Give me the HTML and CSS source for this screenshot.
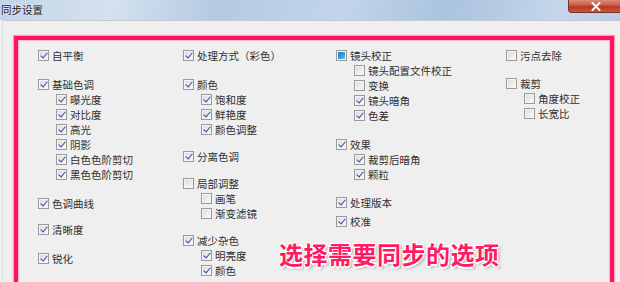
FILE: index.html
```html
<!DOCTYPE html>
<html lang="zh">
<head>
<meta charset="utf-8">
<title>同步设置</title>
<link rel="stylesheet" href="styles.css">
</head>
<body>
<div class="window">
  <div class="titlebar">
    <span class="title">同步设置</span>
    <span class="close"><svg width="10" height="9" viewBox="0 0 10 9"><path d="M1.5 1 L8.5 8 M8.5 1 L1.5 8" stroke="#fff" stroke-width="2" stroke-linecap="round"/></svg></span>
  </div>
  <div class="client">
    <div class="frame">
      <div class="columns">
        <div class="col">
          <div class="group">
            <div class="item"><span class="cb on"></span>自平衡</div>
          </div>
          <div class="group">
            <div class="item"><span class="cb on"></span>基础色调</div>
            <div class="item sub"><span class="cb on"></span>曝光度</div>
            <div class="item sub"><span class="cb on"></span>对比度</div>
            <div class="item sub"><span class="cb on"></span>高光</div>
            <div class="item sub"><span class="cb on"></span>阴影</div>
            <div class="item sub"><span class="cb on"></span>白色色阶剪切</div>
            <div class="item sub"><span class="cb on"></span>黑色色阶剪切</div>
          </div>
          <div class="group">
            <div class="item"><span class="cb on"></span>色调曲线</div>
          </div>
          <div class="group g-small">
            <div class="item"><span class="cb on"></span>清晰度</div>
          </div>
          <div class="group">
            <div class="item"><span class="cb on"></span>锐化</div>
          </div>
        </div>
        <div class="col">
          <div class="group">
            <div class="item"><span class="cb on"></span>处理方式（彩色）</div>
          </div>
          <div class="group">
            <div class="item"><span class="cb on"></span>颜色</div>
            <div class="item sub"><span class="cb on"></span>饱和度</div>
            <div class="item sub"><span class="cb on"></span>鲜艳度</div>
            <div class="item sub"><span class="cb on"></span>颜色调整</div>
          </div>
          <div class="group g-mid">
            <div class="item"><span class="cb on"></span>分离色调</div>
          </div>
          <div class="group g-mid">
            <div class="item"><span class="cb"></span>局部调整</div>
            <div class="item sub"><span class="cb"></span>画笔</div>
            <div class="item sub"><span class="cb"></span>渐变滤镜</div>
          </div>
          <div class="group g-mid">
            <div class="item"><span class="cb on"></span>减少杂色</div>
            <div class="item sub"><span class="cb on"></span>明亮度</div>
            <div class="item sub"><span class="cb on"></span>颜色</div>
          </div>
        </div>
        <div class="col">
          <div class="group">
            <div class="item"><span class="cb mixed"></span>镜头校正</div>
            <div class="item sub"><span class="cb"></span>镜头配置文件校正</div>
            <div class="item sub"><span class="cb"></span>变换</div>
            <div class="item sub"><span class="cb on"></span>镜头暗角</div>
            <div class="item sub"><span class="cb on"></span>色差</div>
          </div>
          <div class="group">
            <div class="item"><span class="cb on"></span>效果</div>
            <div class="item sub"><span class="cb on"></span>裁剪后暗角</div>
            <div class="item sub"><span class="cb on"></span>颗粒</div>
          </div>
          <div class="group g-mid2">
            <div class="item"><span class="cb on"></span>处理版本</div>
          </div>
          <div class="group g-tight">
            <div class="item"><span class="cb on"></span>校准</div>
          </div>
        </div>
        <div class="col">
          <div class="group">
            <div class="item"><span class="cb"></span>污点去除</div>
          </div>
          <div class="group g-mid2">
            <div class="item"><span class="cb"></span>裁剪</div>
            <div class="item sub"><span class="cb"></span>角度校正</div>
            <div class="item sub"><span class="cb"></span>长宽比</div>
          </div>
        </div>
      </div>
    </div>
  </div>
  <div class="annotation">选择需要同步的选项</div>
</div>
</body>
</html>
```
FILE: styles.css
```css
html, body {
  margin: 0;
  padding: 0;
  width: 620px;
  height: 282px;
  overflow: hidden;
  background: #f0f0f0;
}
.window {
  position: relative;
  width: 620px;
  height: 282px;
  font-family: "Noto Sans CJK SC", "Noto Sans", sans-serif;
  color: #303030;
}
.titlebar {
  height: 20px;
  background: linear-gradient(100deg, #c3d4e8 0%, #d4e1ef 18%, #b5cae2 35%, #c2d5ea 55%, #abc3de 72%, #c4d6ea 90%, #b9cde5 100%);
  display: flex;
  justify-content: space-between;
  align-items: flex-start;
}
.title {
  font-size: 10.5px;
  line-height: 20px;
  margin-left: 1px;
  color: #1a1a1a;
  text-shadow: 0 0 3px rgba(255,255,255,0.9);
}
.close {
  width: 56px;
  height: 13px;
  margin-right: -4px;
  background: linear-gradient(#dc8a7c 0%, #c85a45 45%, #b63a24 55%, #c9553f 100%);
  border: 1px solid #7a2f28;
  border-top: none;
  border-radius: 0 0 0 4px;
  display: flex;
  justify-content: center;
  align-items: center;
  box-sizing: border-box;
}
.client {
  height: 262px;
  margin-left: 2px;
  border-top: 1px solid #c3c9d1;
  border-left: 1px solid #dadde2;
  background: #efefef;
  padding: 15px 0 0 11px;
  box-sizing: border-box;
}
.frame {
  width: 600px;
  height: 260px;
  border: 4px solid #fc1460;
  box-shadow: 0 0 1px 1px rgba(252,20,96,0.35), inset 0 0 1px 1px rgba(252,20,96,0.25);
  box-sizing: border-box;
  padding: 8px 0 0 20px;
}
.columns {
  display: grid;
  grid-template-columns: 145px 153px 170px 100px;
}
.col {
  display: flex;
  flex-direction: column;
}
.group {
  display: flex;
  flex-direction: column;
  margin-top: 14px;
}
.group:first-child { margin-top: 0; }
.group.g-small { margin-top: 11px; }
.group.g-mid { margin-top: 12px; }
.group.g-mid2 { margin-top: 13px; }
.group.g-tight { margin-top: 4px; }
.item {
  display: flex;
  align-items: center;
  height: 15px;
  font-size: 10.5px;
  line-height: 15px;
  white-space: nowrap;
}
.item.sub { padding-left: 18px; }
.cb {
  width: 11px;
  height: 11px;
  box-sizing: border-box;
  border: 1px solid #9a9a9a;
  background: linear-gradient(135deg, #d9d9d9 0%, #eeeeee 60%, #fafafa 100%);
  box-shadow: inset 0 0 0 1px #f4f4f4;
  margin-right: 3px;
  position: relative;
  flex: none;
}
.cb.on::after {
  content: "";
  position: absolute;
  left: 3px;
  top: 0px;
  width: 3px;
  height: 6px;
  border-right: 1.6px solid #2b4fa5;
  border-bottom: 1.6px solid #2b4fa5;
  transform: rotate(40deg);
}
.cb.mixed::after {
  content: "";
  position: absolute;
  left: 1px;
  top: 1px;
  width: 7px;
  height: 7px;
  background: linear-gradient(135deg, #1d78c0 0%, #3aa2dc 60%, #6cc4ee 100%);
}
.annotation {
  position: absolute;
  left: 279px;
  top: 238px;
  font-size: 24px;
  line-height: 32px;
  letter-spacing: 0.5px;
  font-weight: 700;
  color: #ff1a66;
  text-shadow: 1px 1px 0 #fff, -1px -1px 0 #fff, 1px -1px 0 #fff, -1px 1px 0 #fff, 0 1.5px 0 #fff, 2px 2px 3px rgba(0,0,0,0.35);
  white-space: nowrap;
}
```
